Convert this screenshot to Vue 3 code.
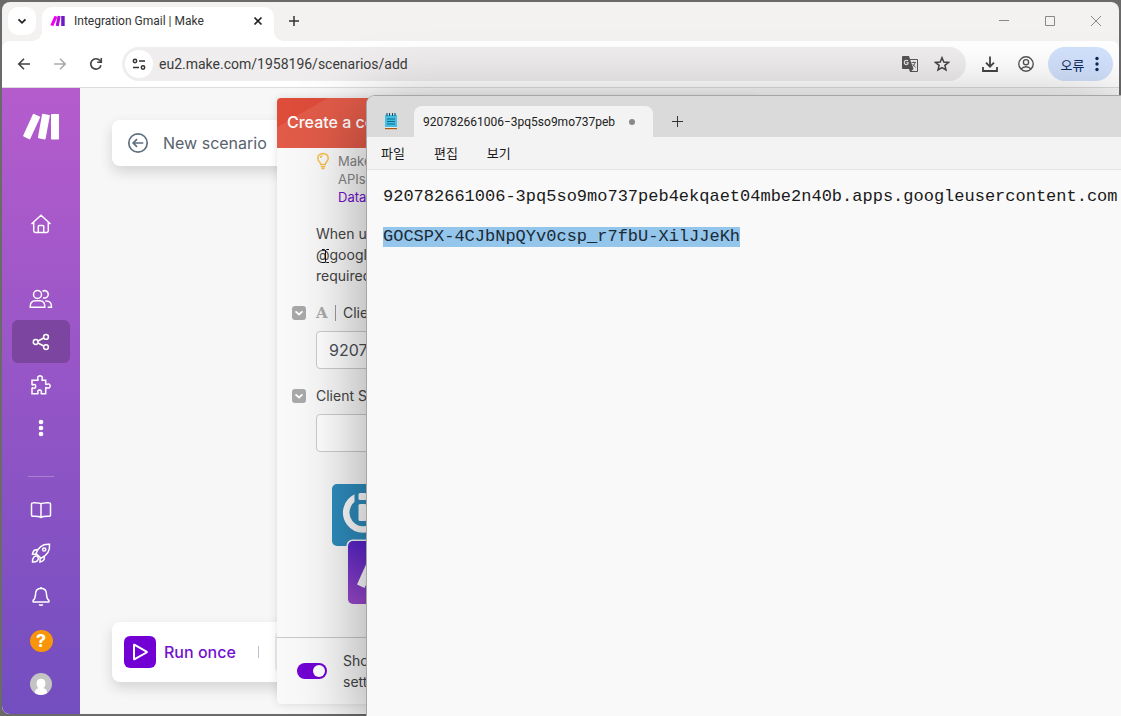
<script setup>
import { ref, onMounted } from 'vue'

const clientId = '920782661006-3pq5so9mo737peb4ekqaet04mbe2n40b.apps.googleusercontent.com'
const secret = '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'
const note = ref(clientId + '\n\n' + secret)
const formId = ref(clientId)
const formSecret = ref('')
const advanced = ref(true)
const url = ref('eu2.make.com/1958196/scenarios/add')
const menus = ['파일', '편집', '보기']
const editor = ref(null)

onMounted(() => {
  const el = editor.value
  el.focus({ preventScroll: true })
  const start = note.value.indexOf(secret)
  el.setSelectionRange(start, start + secret.length)
})
</script>

<template>
  <div class="desktop">
    <div class="browser">
      <header class="tabstrip">
        <button class="tab-search" aria-label="Search tabs">
          <svg width="12" height="12" viewBox="0 0 12 12"><path d="M2.5 4.3 6 7.8l3.5-3.5" fill="none" stroke="#222" stroke-width="1.8" /></svg>
        </button>
        <div class="tab">
          <svg class="favicon" width="16" height="12" viewBox="0 0 16 12">
            <path d="M4.6.8 7.4 2 3.200 11.200.4 10z" fill="#f000f0" />
            <path d="M7.600.8 10.600 1.300 8.800 11.300 5.700 10.800z" fill="#b010d8" />
            <path d="M11.200 1h3.500v10h-3.500z" fill="#7018c8" />
          </svg>
          <span class="tab-title">Integration Gmail | Make</span>
          <button class="tab-close" aria-label="Close tab">
            <svg width="10" height="10" viewBox="0 0 10 10"><path d="M1.500 1.500l7 7m0-7l-7 7" stroke="#222" stroke-width="1.700" /></svg>
          </button>
        </div>
        <button class="new-tab" aria-label="New tab">
          <svg width="12" height="12" viewBox="0 0 12 12"><path d="M6 1v10M1 6h10" stroke="#333" stroke-width="1.500" /></svg>
        </button>
        <div class="win-buttons">
          <button aria-label="Minimize"><svg width="12" height="12" viewBox="0 0 12 12"><path d="M1 5.500h10" stroke="#888" /></svg></button>
          <button aria-label="Maximize"><svg width="12" height="12" viewBox="0 0 12 12"><path d="M1.500 1.500h9v9h-9z" fill="none" stroke="#888" /></svg></button>
          <button aria-label="Close"><svg width="12" height="12" viewBox="0 0 12 12"><path d="M1 1l10 10m0-10L1 11" stroke="#888" /></svg></button>
        </div>
      </header>

      <div class="toolbar">
        <button aria-label="Back"><svg width="16" height="16" viewBox="0 0 16 16"><path d="M14 8H3M8 2.800 2.800 8 8 13.200" fill="none" stroke="#444" stroke-width="1.600" /></svg></button>
        <button aria-label="Forward"><svg width="16" height="16" viewBox="0 0 16 16"><path d="M2 8h11M8 2.800 13.200 8 8 13.200" fill="none" stroke="#aaa" stroke-width="1.600" /></svg></button>
        <button aria-label="Reload"><svg width="16" height="16" viewBox="0 0 16 16"><path d="M13 9.200A5.200 5.200 0 1 1 12 4.600L13 6" fill="none" stroke="#444" stroke-width="1.600" /><path d="M13.300 2v4.200H9.200" fill="none" stroke="#444" stroke-width="1.600" /></svg></button>
        <div class="omnibox">
          <button class="site-info" aria-label="Site information">
            <svg width="14" height="14" viewBox="0 0 14 14" fill="none" stroke="#333" stroke-width="1.500"><circle cx="3" cy="4" r="1.700" /><path d="M7 4h6M1 10.500h6" /><circle cx="11" cy="10.500" r="1.700" /></svg>
          </button>
          <input v-model="url" class="url" aria-label="Address" />
          <button aria-label="Translate">
            <svg width="18" height="18" viewBox="0 0 18 18"><path d="M2 1h6l1 3h7q1 0 1 1v11q0 1-1 1H9l-1-3H2q-1 0-1-1V2q0-1 1-1z" fill="#555" /><path d="M9.300 5H16v11h-5.500l2-2z" fill="#f1eff0" /><path d="M7 6Q5.800 4.800 4.300 5.500 3 6.300 3.300 8q.5 1.700 2 1.700Q7.200 9.600 7.200 7.800H5.300" fill="none" stroke="#eee" stroke-width="1.100" /><path d="M10.500 7.500h4.500M12.700 6.500v1M14 7.700q-.5 3-3 4.300M11.600 9l3 3.500" fill="none" stroke="#666" /></svg>
          </button>
          <button aria-label="Bookmark">
            <svg width="16" height="16" viewBox="0 0 16 16"><path d="M8 1.700 9.800 6l4.700.4-3.600 3 1.100 4.600L8 11.600 4 14l1.100-4.600-3.600-3L6.200 6z" fill="none" stroke="#444" stroke-width="1.500" /></svg>
          </button>
        </div>
        <button aria-label="Downloads"><svg width="18" height="18" viewBox="0 0 18 18"><path d="M9 1.500v10M5 7.700l4 4 4-4M2 12v4h14v-4" fill="none" stroke="#444" stroke-width="1.800" /></svg></button>
        <button aria-label="Profile"><svg width="18" height="18" viewBox="0 0 18 18" fill="none" stroke="#555" stroke-width="1.400"><circle cx="9" cy="9" r="7.200" /><circle cx="9" cy="7.200" r="2.600" /><path d="M4 14q2-2.300 5-2.300T14 14" /></svg></button>
        <button class="error-chip">
          <span>오류</span>
          <svg width="6" height="16" viewBox="0 0 6 16" fill="#0b2a5c"><circle cx="3" cy="2.500" r="1.700" /><circle cx="3" cy="8" r="1.700" /><circle cx="3" cy="13.500" r="1.700" /></svg>
        </button>
      </div>

      <main class="page">
        <nav class="sidebar" aria-label="Main">
          <a href="#" class="logo" aria-label="Make">
            <svg width="38" height="28" viewBox="0 0 38 28" fill="#fff">
              <path d="M10.900 1.300q.4-.8 1.200-.4l5.600 2.600q.7.300.4 1L8.300 25.800q-.4.800-1.200.4L1.600 23.600q-.7-.4-.4-1.100z" />
              <path d="M20 1.500q.2-.8 1-.7l6.200 1.100q.8.200.6 1L23.600 25.700q-.2.800-1 .7l-6-1.100q-.8-.2-.6-1z" />
              <rect x="29" y="1" width="8" height="25.500" rx=".8" />
            </svg>
          </a>
          <a href="#" class="item home" aria-label="Home">
            <svg width="22" height="22" viewBox="0 0 22 22"><path d="M1.500 11 11 2.300 20.500 11M3.700 9.300v8.500q0 1.700 1.700 1.700h11.200q1.700 0 1.700-1.700V9.300M8.300 19.300v-6q0-.8.800-.8h3.800q.8 0 .8.800v6" /></svg>
          </a>
          <a href="#" class="item" aria-label="Team">
            <svg width="24" height="22" viewBox="0 0 24 22"><circle cx="8.500" cy="6.500" r="4" /><path d="M13.500 3.300A3.700 3.700 0 1 1 14 9.700M1.200 19.300q-.3-6.500 5.300-6.500h4.200q5.500 0 5.100 6.500zM16.300 13q6.400-.5 6.200 6.300h-3.800" /></svg>
          </a>
          <a href="#" class="item active" aria-label="Scenarios">
            <svg width="18" height="18" viewBox="0 0 18 18"><circle cx="3.700" cy="9" r="2.400" /><circle cx="14" cy="3.900" r="2.400" /><circle cx="14" cy="14.100" r="2.400" /><path d="M6 8 11.700 5M6 10l5.700 3" /></svg>
          </a>
          <a href="#" class="item" aria-label="Templates">
            <svg width="22" height="22" viewBox="0 0 22 22"><path d="M2 7.500V6.300h5.500q.8 0 .5-.9Q6.800 2 10 1.800q3.300.2 2 3.600-.3.900.5.900h3.200v3.500q0 .9.800.6 3.500-1.300 3.700 1.600-.2 3-3.700 1.700-.8-.3-.8.500v5.500h-4q-.8 0-.5-.8.900-2.700-1.700-2.900-2.500.2-1.500 2.900.3.800-.5.800H2v-5.300q0-.8.800-.5 2.700 1 2.900-1.500-.2-2.600-2.900-1.600-.8.300-.8-.5z" /></svg>
          </a>
          <a href="#" class="item" aria-label="More">
            <svg width="6" height="18" viewBox="0 0 6 18" class="solid"><circle cx="3" cy="3" r="2.300" /><circle cx="3" cy="9" r="2.300" /><circle cx="3" cy="15" r="2.300" /></svg>
          </a>
          <hr />
          <a href="#" class="item" aria-label="Resources">
            <svg width="22" height="20" viewBox="0 0 22 20"><path d="M11 4Q9.500 2.500 3 2.700q-1.500 0-1.500 1.500v10.600q0 1.500 1.500 1.400 6-.2 8 1.300 2-1.500 8-1.300 1.500.1 1.500-1.400V4.200q0-1.500-1.500-1.500Q12.500 2.500 11 4zv13.500" /></svg>
          </a>
          <a href="#" class="item" aria-label="What's new">
            <svg width="22" height="22" viewBox="0 0 22 22"><path d="M6 11.500Q9.500 1.500 19.500 2.200 20.500 12 11 16.200zM8.500 7.500 5 8q-2 .7-2.500 4.200l3.700-.2M14.500 14l-.4 3.500q-.7 1.800-4.100 2.500l.2-4.200M7.500 14.200q-2-.8-3.600.8-1.500 1.500-1.400 5 3.500.1 5-1.400 1.500-1.500.5-3.700z" /><circle cx="14.200" cy="7.500" r="1.600" /></svg>
          </a>
          <a href="#" class="item" aria-label="Notifications">
            <svg width="20" height="22" viewBox="0 0 20 22"><path d="M10 2v1.300M10 3.300q5.500.2 5.500 6 0 4.200 2.300 6 .7 1.700-.8 1.700H3q-1.500 0-.8-1.700 2.300-1.800 2.300-6 0-5.800 5.500-6zM8 19.700q2 1.200 4 0" /></svg>
          </a>
          <a href="#" class="item help-item" aria-label="Help"><span class="help">?</span></a>
          <a href="#" class="item" aria-label="Account">
            <svg width="22" height="22" viewBox="0 0 22 22" class="avatar"><circle cx="11" cy="11" r="11" fill="#c4c4c4" /><path d="M4.800 20Q5 16 8.500 15.300 6.400 13 6.500 10q.3-4.200 4.500-4.300 4.200.1 4.500 4.300.1 3-2 5.300Q17 16 17.200 20 14 22 11 22t-6.200-2z" fill="#fff" /></svg>
          </a>
        </nav>

        <section class="canvas">
          <div class="card top-card">
            <button aria-label="Back to scenarios">
              <svg width="22" height="22" viewBox="0 0 22 22" fill="none" stroke="#5f6f7d" stroke-width="1.700"><circle cx="11" cy="11" r="9.200" /><path d="M16.300 11H6.500M10 7.200 6.200 11l3.800 3.800" /></svg>
            </button>
            <h1>New scenario</h1>
          </div>
          <div class="card run-card">
            <button class="run">
              <span class="play"><svg width="20" height="20" viewBox="0 0 20 20"><path d="M4 3.200v13.600q0 .8.700.4L16.500 10.500q.7-.5 0-.9L4.700 2.800Q4 2.400 4 3.200z" fill="none" stroke="#fff" stroke-width="2" /></svg></span>
              Run once
            </button>
            <i class="rule"></i>
            <i class="ghost"></i>
          </div>

          <form class="modal" @submit.prevent>
            <h2>Create a co</h2>
            <div class="modal-body">
              <div class="hint">
                <svg width="14" height="18" viewBox="0 0 14 18" fill="none" stroke="#f7c04c" stroke-width="1.500"><path d="M4.700 12.500Q4.500 11 3.200 9.600 1.800 8 1.800 6.200 2 1.600 7 1.500q5 .1 5.200 4.700 0 1.800-1.400 3.400Q9.500 11 9.300 12.500zM4.800 14.700h4.400" /><path d="M5.500 16.500h3M4.500 6Q4.600 4 6.500 3.800" /></svg>
                <p>Make<br />APIs<br /><a href="#">Data</a></p>
              </div>
              <p class="info">When using<br />@google<br />required</p>
              <div class="field">
                <button class="collapse" aria-label="Toggle Client ID"><svg width="10" height="8" viewBox="0 0 10 8"><path d="M1.500 2.300 5 5.500l3.500-3.200" fill="none" stroke="#fff" stroke-width="1.800" /></svg></button>
                <span class="type">A</span>
                <label for="client-id">Client ID</label>
              </div>
              <input id="client-id" v-model="formId" />
              <div class="field">
                <button class="collapse" aria-label="Toggle Client Secret"><svg width="10" height="8" viewBox="0 0 10 8"><path d="M1.500 2.300 5 5.500l3.500-3.200" fill="none" stroke="#fff" stroke-width="1.800" /></svg></button>
                <label for="client-secret">Client Secret</label>
              </div>
              <input id="client-secret" v-model="formSecret" />
              <svg class="art" width="80" height="124" viewBox="0 0 80 124">
                <defs><linearGradient id="tile" x1="0.500" y1="0" x2="0.300" y2="1"><stop offset="0" stop-color="#5522cc" /><stop offset="1" stop-color="#9a48cc" /></linearGradient></defs>
                <rect y="2" width="63" height="62" rx="5" fill="#2e8dbe" />
                <path d="M24.500 15A17 17 0 1 0 38 15" fill="none" stroke="#fff" stroke-width="6.500" />
                <path d="M22.500 9h16v23h-16z" fill="#2e8dbe" />
                <rect x="26.500" y="11" width="8" height="7" rx="1.500" fill="#fff" />
                <rect x="26.500" y="22" width="8" height="17" rx="1.500" fill="#fff" />
                <rect x="14.500" y="57.500" width="66" height="66" rx="6" fill="#f8f8f8" />
                <rect x="16" y="59" width="63" height="63" rx="5" fill="url(#tile)" />
                <path d="M36 78l8 4-11.500 24-7.500-3.500z" fill="#fff" />
              </svg>
            </div>
            <footer>
              <input id="advanced" v-model="advanced" type="checkbox" class="switch" />
              <label for="advanced">Show<br />settings</label>
            </footer>
          </form>
        </section>
      </main>
    </div>

    <svg class="pointer" width="9" height="16" viewBox="0 0 9 16"><path d="M1 1.500h2.500l1 1 1-1H8M4.500 2.500v11M1 14.500h2.500l1-1 1 1H8" fill="none" stroke="#111" /></svg>

    <section class="notepad" aria-label="Notepad">
      <header class="np-title">
        <svg class="np-icon" width="14" height="18" viewBox="0 0 14 18"><path d="M1 3h12v12H1z" fill="#45bfe0" /><path d="M1 15h12v1H1z" fill="#e8e8e8" /><path d="M1 16h12v1.200H1z" fill="#b0560c" /><path d="M3 1v3M5.500 1v3M8.500 1v3M11 1v3" stroke="#12506e" stroke-width="1.100" /><path d="M3 7h8M3 9.500h8M3 12h8" stroke="#0c6a94" stroke-width="1.200" /></svg>
        <div class="np-tab"><span>920782661006−3pq5so9mo737peb</span><i></i></div>
        <button class="np-new" aria-label="New tab"><svg width="12" height="12" viewBox="0 0 12 12"><path d="M6.500 1v11M1 6.500h11" stroke="#333" /></svg></button>
      </header>
      <div class="np-menu"><button v-for="m in menus" :key="m">{{ m }}</button></div>
      <textarea ref="editor" v-model="note" spellcheck="false" aria-label="Note text"></textarea>
    </section>
  </div>
</template>

<style>
html, body { margin: 0; overflow: hidden; }
</style>

<style scoped>
* { box-sizing: border-box; }
button { border: 0; padding: 0; background: none; color: inherit; font: inherit; display: flex; align-items: center; justify-content: center; }
svg { flex: none; display: block; }
h1, h2, p { margin: 0; font-weight: 400; }
a { text-decoration: none; }

.desktop { position: relative; height: 100vh; padding: 2px; background: #6b6a6a; overflow: hidden; font-family: Inter, "Noto Sans CJK KR", sans-serif; }
.browser { height: 100%; display: flex; flex-direction: column; border-radius: 8px; overflow: hidden; background: #f3f2f0; }

.tabstrip { display: flex; height: 39px; flex: none; font-family: Roboto, "Noto Sans CJK KR", sans-serif; }
.tab-search { width: 28px; height: 28px; margin: 5px 6px 0; border-radius: 10px; background: #fff; }
.tab { position: relative; width: 232px; margin-top: 5px; padding: 0 10px 6px 8px; border-radius: 10px 10px 0 0; background: #fff; display: flex; align-items: center; }
.tab::before, .tab::after { content: ""; position: absolute; bottom: 0; width: 10px; height: 10px; }
.tab::before { right: 100%; background: radial-gradient(circle at 0 0, transparent 10px, #fff 10px); }
.tab::after { left: 100%; background: radial-gradient(circle at 100% 0, transparent 10px, #fff 10px); }
.tab-title { flex: 1; margin-left: 8px; font-size: 12px; color: #333; }
.tab-close { width: 12px; height: 16px; }
.new-tab { width: 20px; height: 28px; margin: 5px 0 0 10px; }
.win-buttons { margin-left: auto; display: flex; }
.win-buttons button { width: 46px; height: 38px; }

.toolbar { flex: none; height: 47px; display: flex; align-items: center; gap: 8px; padding: 0 6px 0 8px; background: #fff; border-bottom: 1px solid #dcdcdc; border-radius: 8px 8px 0 0; }
.toolbar button { width: 28px; height: 28px; }
.omnibox { flex: 1; min-width: 0; height: 34px; margin: 0 2px 0 4px; padding: 0 10px 0 3px; border-radius: 17px; background: #efedee; display: flex; align-items: center; gap: 4px; }
.omnibox .site-info { border-radius: 14px; background: #fff; }
.url { flex: 1; min-width: 0; margin-left: 2px; padding: 0; border: 0; outline: 0; background: none; color: #3b3b3b; font: 14px Roboto, sans-serif; }
.toolbar .error-chip { width: 65px; height: 34px; border-radius: 17px; gap: 10px; background: #d2e1fc; color: #0b2a5c; font: 13px "Noto Sans CJK KR", sans-serif; }

.page { flex: 1; min-height: 0; display: flex; background: #f7f7f7; }
.sidebar { width: 78px; flex: none; display: flex; flex-direction: column; align-items: center; background: linear-gradient(#b55ccd, #724ebf); }
.logo { margin: 25px 0 61px; }
.item { width: 58px; height: 43px; border-radius: 6px; display: flex; align-items: center; justify-content: center; }
.item svg { fill: none; stroke: #fff; stroke-width: 1.500; }
.item svg.solid { fill: #fff; stroke: none; }
.item svg.avatar { stroke: none; }
.home { margin-bottom: 32px; }
.active { background: #7c459f; }
.sidebar hr { width: 26px; margin: 27px 0 11px; border: 0; border-top: 1px solid #a982d4; }
.help-item { margin-top: 2px; }
.help { width: 23px; height: 22px; border-radius: 50%; background: #f9950a; color: #fff; font-weight: 700; font-size: 18px; line-height: 22px; text-align: center; }

.canvas { position: relative; flex: 1; min-width: 0; padding: 32px; display: flex; flex-direction: column; justify-content: space-between; overflow: hidden; }
.card { display: flex; align-items: center; background: #fff; border-radius: 8px; box-shadow: 0 6px 14px rgba(0, 0, 0, .14); }
.top-card { height: 46px; padding: 0 15px; gap: 14px; color: #57626d; }
.top-card h1 { font-size: 16px; }
.run-card { height: 60px; padding: 0 12px; }
.run { gap: 8px; color: #7310d0; font-size: 16px; font-weight: 500; }
.play { width: 32px; height: 32px; border-radius: 6px; background: #7200d4; display: flex; align-items: center; justify-content: center; }
.rule { width: 1px; height: 12px; margin: 0 16px 0 22px; background: #b9c2cb; }
.ghost { width: 42px; height: 42px; border-radius: 6px; background: #ececec; }

.modal { position: absolute; left: 197px; top: 10px; bottom: 10px; width: 480px; display: flex; flex-direction: column; background: #f9f9f9; border-radius: 4px; box-shadow: 0 0 8px rgba(0, 0, 0, .12); overflow: hidden; font-size: 14px; line-height: 21px; color: #444; }
.modal h2 { height: 50px; padding-left: 10px; background: linear-gradient(150deg, #de4c3a 9%, #e25b49 9%); color: #fff; font-size: 16px; font-weight: 500; line-height: 49px; }
.modal-body { flex: 1; min-height: 0; padding: 4px 15px 0; }
.hint { display: flex; gap: 8px; padding-left: 24px; font-size: 13px; line-height: 18px; color: #858585; }
.hint a { color: #7310d0; }
.info { margin: 17px 0 16px 24px; }
.field { height: 21px; display: flex; align-items: center; }
.collapse { width: 14px; height: 14px; margin-right: 10px; border-radius: 3px; background: #a9a9a9; }
.type { width: 20px; height: 16px; margin-right: 7px; border-right: 1px solid #999; color: #aaa; font: 700 15px/16px "DejaVu Serif", serif; }
.modal-body input { display: block; width: 400px; height: 38px; margin: 8px 0 16px 24px; padding: 0 12px; border: 1px solid #ccc; border-radius: 4px; background: #fff; color: #4a5058; font: 16px Inter, sans-serif; }
.art { margin: 30px 0 0 40px; }
.modal footer { height: 67px; padding: 0 20px; border-top: 1px solid #c8c8c8; display: flex; align-items: center; gap: 16px; }
.switch { appearance: none; width: 30px; height: 16px; margin: 0; padding: 2px; border-radius: 8px; background: #7200d4; display: flex; justify-content: flex-end; }
.switch::before { content: ""; width: 12px; height: 12px; border-radius: 50%; background: #fff; }
.switch:not(:checked) { justify-content: flex-start; background: #aaa; }

.pointer { position: absolute; left: 321px; top: 248px; }

.notepad { position: absolute; left: 367px; top: 96px; right: 0; bottom: 0; display: flex; flex-direction: column; border-radius: 8px 0 0 0; background: #f9f9f9; box-shadow: 0 0 0 1px #a6a6a6, 0 16px 70px 4px rgba(0, 0, 0, .36); }
.np-title { height: 41px; display: flex; padding-left: 17px; background: #dadada; border-radius: 8px 0 0 0; }
.np-icon { margin: 16px 16px 0 0; }
.np-tab { position: relative; width: 239px; margin-top: 10px; padding: 0 18px 0 9px; border-radius: 8px 8px 0 0; background: #f3f3f3; display: flex; align-items: center; justify-content: space-between; font: 12px Roboto, sans-serif; color: #222; }
.np-tab i { width: 6px; height: 6px; border-radius: 50%; background: #888; }
.np-new { width: 28px; height: 30px; margin: 10px 0 0 10px; }
.np-menu { height: 33px; display: flex; gap: 29px; padding: 0 0 2px 14px; background: #f3f3f3; border-bottom: 1px solid #e4e4e4; font: 13px "Noto Sans CJK KR", sans-serif; color: #1a1a1a; }
.notepad textarea { flex: 1; min-height: 0; border: 0; outline: 0; resize: none; overflow: hidden; padding: 17px 0 0 16px; background: #f9f9f9; color: #1a1a1a; font: 17px/20px "Liberation Mono", monospace; white-space: pre; }
.notepad textarea::selection { background: #94c5ea; color: #1a2a36; }
</style>
